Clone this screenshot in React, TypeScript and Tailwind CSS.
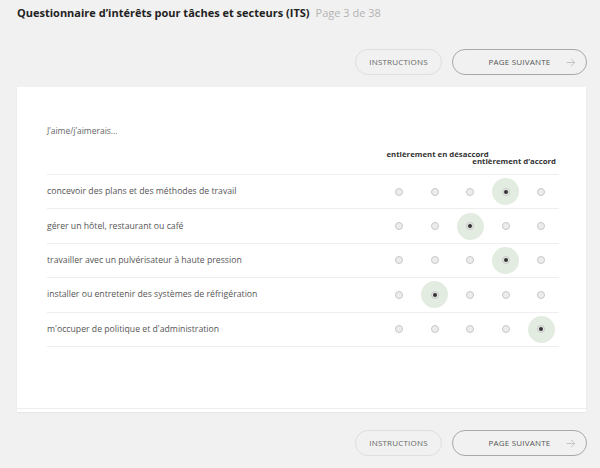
import React from 'react';

const items = [
  { label: 'concevoir des plans et des méthodes de travail', value: 3 },
  { label: 'gérer un hôtel, restaurant ou café', value: 2 },
  { label: 'travailler avec un pulvérisateur à haute pression', value: 3 },
  { label: 'installer ou entretenir des systèmes de réfrigération', value: 1 },
  { label: "m'occuper de politique et d'administration", value: 4 }];

function NavButtons() {
  return (
    <div className="flex justify-end gap-[10px] pr-[13px]">
      <button className="h-[26px] w-[87px] rounded-full border border-[#dedede] text-[8px] uppercase tracking-[0.2px] text-[#666]">
        Instructions
      </button>
      <button className="relative h-[26px] w-[135px] rounded-full border border-[#a8a8a8] text-[8px] uppercase tracking-[0.2px] text-[#555]">
        Page suivante
        <svg
          className="absolute right-[10px] top-[8px]"
          width="10"
          height="9"
          viewBox="0 0 10 9"
          fill="none"
          stroke="#c4c4c4"
          strokeWidth="1">
          <path d="M0.5 4.5h8.5M5 0.8l3.8 3.7L5 8.2" />
        </svg>
      </button>
    </div>);

}

function Radio({ checked }: { checked: boolean }) {
  return (
    <div className="flex w-[35.5px] items-center justify-center">
      <div className="flex h-[27px] w-[27px] items-center justify-center rounded-full">
        {checked ?
        <div className="flex h-[27px] w-[27px] items-center justify-center rounded-full bg-[#e3ece0]">
            <div className="flex h-[8px] w-[8px] items-center justify-center rounded-full border border-[#c8c8c8] bg-[#e8e8e8]">
              <div className="h-[4px] w-[4px] rounded-full bg-[#333]" />
            </div>
          </div> :

        <div className="h-[8px] w-[8px] rounded-full border border-[#c8c8c8] bg-[#ececec]" />
        }
      </div>
    </div>);

}

export default function App() {
  return (
    <div className="min-h-screen bg-[#f1f1f1] font-['Open_Sans',sans-serif] text-[#444]">
      <div className="flex items-baseline gap-[6px] px-[17px] pt-[4px] text-[11px] leading-[18px]">
        <h1 className="font-bold text-[#222]">
          Questionnaire d’intérêts pour tâches et secteurs (ITS)
        </h1>
        <span className="text-[#b3b3b3]">Page 3 de 38</span>
      </div>

      <div className="mt-[27px]">
        <NavButtons />
      </div>

      <div className="mx-[17px] mr-[14px] mt-[12px] bg-white shadow-[0_1px_2px_rgba(0,0,0,0.05)]">
        <div className="border-b border-[#eeeeee] pb-[61px] pl-[30px] pr-[27px] pt-[38px]">
          <p className="text-[8.5px] leading-[12px] text-[#666]">J’aime/j’aimerais...</p>

          <div className="mt-[14px] flex justify-end">
            <div className="w-[177.5px] text-[7.8px] font-bold leading-[7px] text-[#333]">
              <div className="pl-[5px]">entièrement en désaccord</div>
              <div className="pr-[3px] text-right">entièrement d’accord</div>
            </div>
          </div>

          <div className="mt-[9px] border-b border-[#eeeeee]">
            {items.map((item) =>
            <div
              key={item.label}
              className="flex h-[34.4px] items-center border-t border-[#eeeeee]">
              
                <div className="flex-1 text-[8.7px] text-[#555]">{item.label}</div>
                {[0, 1, 2, 3, 4].map((i) =>
              <Radio key={i} checked={i === item.value} />
              )}
              </div>
            )}
          </div>
        </div>
        <div className="h-[3px] bg-white" />
      </div>

      <div className="mt-[18px]">
        <NavButtons />
      </div>
    </div>);

}
